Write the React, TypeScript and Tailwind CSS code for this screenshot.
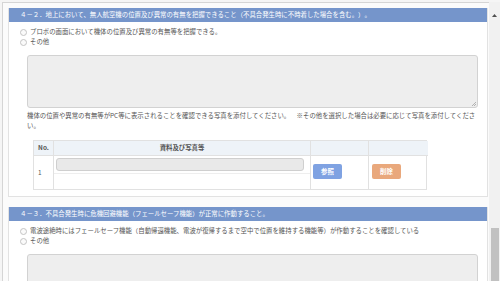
import React from "react"

const font = { fontFamily: '"Noto Sans CJK JP", "Noto Sans", sans-serif' }

function Radio({ label }: { label: string }) {
  return (
    <label className="flex items-center h-[10px]">
      <span className="w-[7px] h-[7px] rounded-full border border-[#c4c4c4] bg-[#fafafa] mr-[3px] shrink-0" />
      <span className="whitespace-nowrap">{label}</span>
    </label>
  )
}

function TextArea({ height }: { height: string }) {
  return (
    <div
      className={`relative ml-[7px] mr-0 rounded-[3px] border border-[#d2d2d2] bg-[#eeeeee] ${height}`}
    >
      <svg className="absolute right-[1px] bottom-[1px]" width="5" height="5" viewBox="0 0 5 5">
        <path d="M5 1 L1 5 M5 3 L3 5" stroke="#9a9a9a" strokeWidth="0.7" />
      </svg>
    </div>
  )
}

function Section({
  title,
  children,
}: {
  title: string
  children: React.ReactNode
}) {
  return (
    <section className="bg-white border-x border-b border-[#e2e2e2]">
      <div className="h-[14px] bg-[#7595cb] text-white flex items-center pl-[11px] whitespace-nowrap">
        {title}
      </div>
      <div className="pl-[11px] pr-[9px] pt-[5px]">{children}</div>
    </section>
  )
}

export default function App() {
  return (
    <div
      className="w-[500px] h-[281px] overflow-hidden flex bg-[#f5f5f5] text-[#555] text-[6.4px] leading-[10px] [text-spacing-trim:space-all]"
      style={font}
    >
      <div className="flex-1 mt-[2px] ml-[2px] border-l border-t border-[#d5d5d5] bg-[#fbfbfb] pl-[5px] pt-[5px] pr-[1px]">
        <Section title="４－２．地上において、無人航空機の位置及び異常の有無を把握できること（不具合発生時に不時着した場合を含む。）。">
          <Radio label="プロポの画面において機体の位置及び異常の有無等を把握できる。" />
          <Radio label="その他" />
          <div className="mt-[8px]">
            <TextArea height="h-[53px]" />
          </div>
          <p className="ml-[7px] mt-[3px] leading-[10px] whitespace-nowrap">
            機体の位置や異常の有無等がPC等に表示されることを確認できる写真を添付してください。　※その他を選択した場合は必要に応じて写真を添付してくださ
            <br />
            い。
          </p>
          <div className="ml-[13px] mt-[9px] mb-[6px] w-[394px]">
            <div className="grid grid-cols-[20px_257px_58px_59px] border border-[#e1e1e1]">
              <div className="h-[15px] bg-[#eef3f8] border-r border-b border-[#e1e1e1] flex items-center justify-center font-bold">No.</div>
              <div className="h-[15px] bg-[#eef3f8] border-r border-b border-[#e1e1e1] flex items-center justify-center font-bold">資料及び写真等</div>
              <div className="h-[15px] bg-[#eef3f8] border-r border-b border-[#e1e1e1]" />
              <div className="h-[15px] bg-[#eef3f8] border-b border-[#e1e1e1]" />
              <div className="h-[33px] border-r border-[#e1e1e1] flex items-center pl-[4px]">1</div>
              <div className="h-[33px] border-r border-[#e1e1e1] flex flex-col">
                <div className="h-[18px] border-b border-[#eeeeee] pt-[2px] px-[2px]">
                  <div className="h-[13px] w-[248px] rounded-[3px] border border-[#cfcfcf] bg-[#e9e9e9]" />
                </div>
              </div>
              <div className="h-[33px] border-r border-[#e1e1e1] flex items-start pl-[2px] pt-[8px]">
                <button className="w-[29px] h-[15px] rounded-[2px] bg-[#7fa2e2] text-white font-bold text-[6.4px]">参照</button>
              </div>
              <div className="h-[33px] flex items-start pl-[3px] pt-[8px]">
                <button className="w-[29px] h-[15px] rounded-[2px] bg-[#e9a87c] text-white font-bold text-[6.4px]">削除</button>
              </div>
            </div>
          </div>
        </Section>
        <div className="h-[10px]" />
        <Section title="４－３．不具合発生時に危機回避機能（フェールセーフ機能）が正常に作動すること。">
          <Radio label="電波途絶時にはフェールセーフ機能（自動帰還機能、電波が復帰するまで空中で位置を維持する機能等）が作動することを確認している" />
          <Radio label="その他" />
          <div className="mt-[8px]">
            <TextArea height="h-[53px]" />
          </div>
        </Section>
      </div>
      <div className="w-[11px] mt-[2px] bg-[#f1f1f1] flex flex-col items-center">
        <div className="h-[17px] w-full flex items-end justify-center pb-[2px]">
          <svg width="5" height="3" viewBox="0 0 5 3">
            <path d="M0 3 L2.5 0 L5 3 Z" fill="#505050" />
          </svg>
        </div>
        <div className="flex-1" />
        <div className="w-[8px] h-[53px] bg-[#c1c1c1]" />
      </div>
    </div>
  )
}
